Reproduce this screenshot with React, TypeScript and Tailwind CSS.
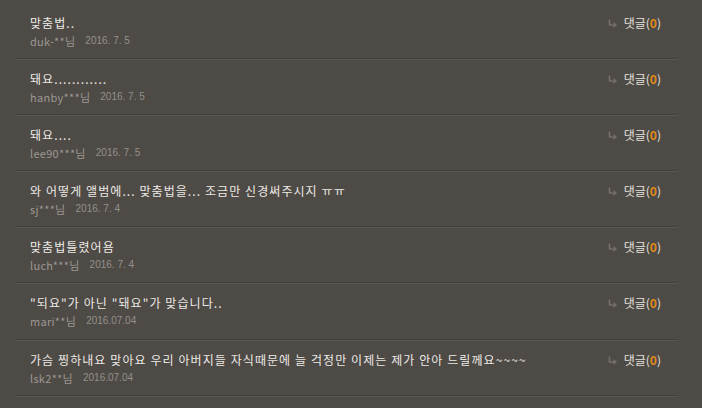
import React from 'react'

type Comment = {
  text: string
  user: string
  date: string
}

const comments: Comment[] = [
  { text: '맞춤법..', user: 'duk-**님', date: '2016. 7. 5' },
  { text: '돼요............', user: 'hanby***님', date: '2016. 7. 5' },
  { text: '돼요....', user: 'lee90***님', date: '2016. 7. 5' },
  { text: '와 어떻게 앨범에... 맞춤법을... 조금만 신경써주시지 ㅠㅠ', user: 'sj***님', date: '2016. 7. 4' },
  { text: '맞춤법틀렸어욤', user: 'luch***님', date: '2016. 7. 4' },
  { text: '"되요"가 아닌 "돼요"가 맞습니다..', user: 'mari**님', date: '2016.07.04' },
  { text: '가슴 찡하내요 맞아요 우리 아버지들 자식때문에 늘 걱정만 이제는 제가 안아 드릴께요~~~~', user: 'lsk2**님', date: '2016.07.04' },
]

const ReplyArrow = () => (
  <svg width="9" height="9" viewBox="0 0 9 9" className="mr-[7px]">
    <path d="M1.5 0.5 V6 H7" fill="none" stroke="#75706b" strokeWidth="1.6" />
    <path d="M5.5 3.8 L8 6 L5.5 8.2" fill="none" stroke="#75706b" strokeWidth="1.4" />
  </svg>
)

const CommentRow = ({ c, tall }: { c: Comment; tall?: boolean }) => (
  <div
    className={`flex justify-between border-b border-[#44403c] shadow-[0_1px_0_#5a5652] pl-[15px] pr-[17px] pt-[12px] ${
      tall ? 'h-[57px]' : 'h-[56px]'
    }`}
  >
    <div>
      <p className="text-[12px] leading-[16px] tracking-[1.08px] text-[#ece9e5]">{c.text}</p>
      <div className="mt-[2px] flex items-center leading-[16px]">
        <span className="text-[11px] tracking-[0.3px] text-[#9d9893]">{c.user}</span>
        <span
          className="ml-[10px] text-[10px] text-[#94908b]"
          style={{ fontFamily: '"Liberation Sans", Arial, sans-serif' }}
        >
          {c.date}
        </span>
      </div>
    </div>
    <div className="flex h-[16px] items-center text-[12px] text-[#e4e1dd]">
      <ReplyArrow />
      <span>댓글(</span>
      <span className="font-bold text-[#e0891c]">0</span>
      <span>)</span>
    </div>
  </div>
)

export default function App() {
  return (
    <div
      className="h-[408px] w-[702px] overflow-hidden bg-[#4e4a46] pt-[3px]"
      style={{ fontFamily: '"Noto Sans CJK KR", "Noto Sans", sans-serif' }}
    >
      <div className="ml-[15px] w-[663px]">
        {comments.map((c, i) => (
          <CommentRow key={i} c={c} tall={i === 5} />
        ))}
      </div>
    </div>
  )
}
